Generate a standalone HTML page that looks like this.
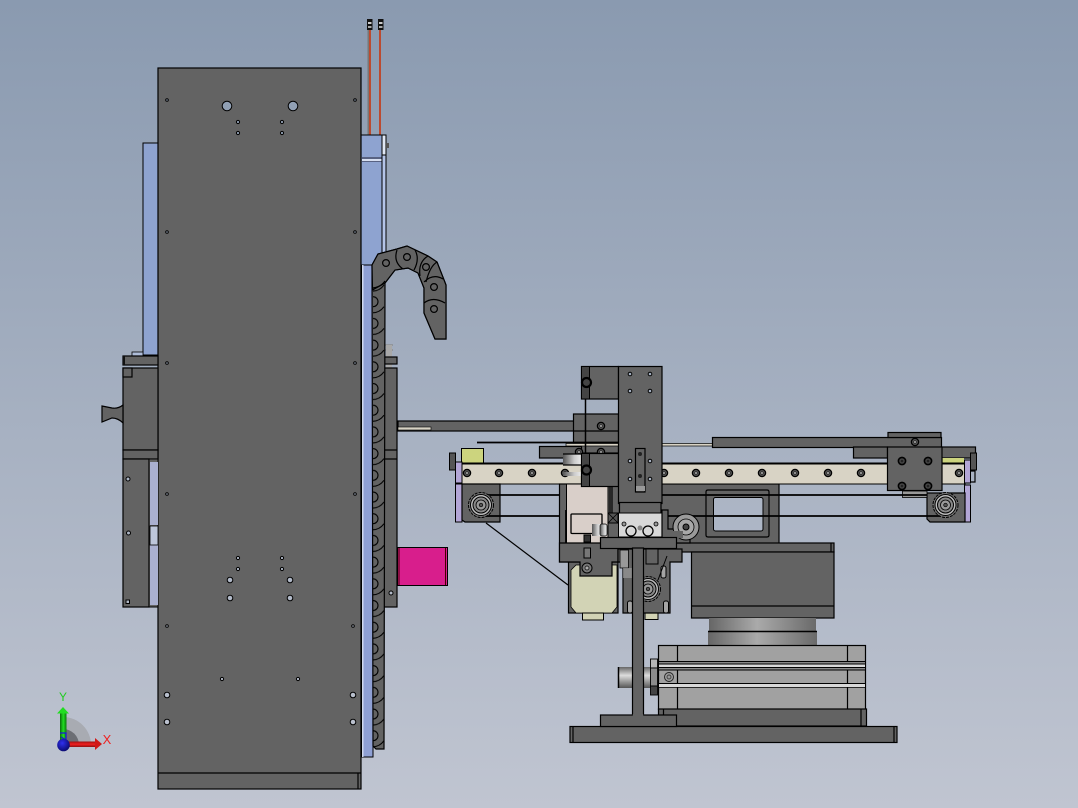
<!DOCTYPE html>
<html><head><meta charset="utf-8"><title>CAD assembly</title>
<style>
html,body{margin:0;padding:0;width:1078px;height:808px;overflow:hidden;background:#a5afc0}
svg{display:block}
text{font-family:"Liberation Sans",sans-serif}
.d{fill:#636363;stroke:#000;stroke-width:1.2}
.k{fill:none;stroke:#000;stroke-width:1.2}
.h{fill:url(#bg);stroke:#000;stroke-width:1}
</style></head><body>
<svg width="1078" height="808" viewBox="0 0 1078 808" xmlns="http://www.w3.org/2000/svg">
<defs>
<linearGradient id="bg" gradientUnits="userSpaceOnUse" x1="0" y1="0" x2="0" y2="808"><stop offset="0" stop-color="#8a9ab0"/><stop offset="1" stop-color="#c0c5d1"/></linearGradient>
<linearGradient id="cyl" x1="0" y1="0" x2="1" y2="0"><stop offset="0" stop-color="#666"/><stop offset=".45" stop-color="#aaa"/><stop offset="1" stop-color="#6a6a6a"/></linearGradient>
<linearGradient id="rod" x1="0" y1="0" x2="0" y2="1"><stop offset="0" stop-color="#666"/><stop offset=".4" stop-color="#ddd"/><stop offset="1" stop-color="#555"/></linearGradient>
<linearGradient id="roll" x1="0" y1="0" x2="1" y2="0"><stop offset="0" stop-color="#555"/><stop offset=".6" stop-color="#ccc"/><stop offset="1" stop-color="#eee"/></linearGradient>
<linearGradient id="gy" x1="0" y1="0" x2="1" y2="0"><stop offset="0" stop-color="#0a6a0a"/><stop offset=".5" stop-color="#22dd22"/><stop offset="1" stop-color="#0a7a0a"/></linearGradient>
<linearGradient id="rd" x1="0" y1="0" x2="0" y2="1"><stop offset="0" stop-color="#a01010"/><stop offset=".5" stop-color="#f02020"/><stop offset="1" stop-color="#901010"/></linearGradient>
<radialGradient id="bl" cx=".4" cy=".35" r=".7"><stop offset="0" stop-color="#3030ee"/><stop offset="1" stop-color="#08086a"/></radialGradient>
<pattern id="chain" x="373" y="272" width="12" height="21.7" patternUnits="userSpaceOnUse">
<rect width="12" height="21.7" fill="#636363"/>
<path d="M0 3A5 5 0 0 1 0 13M0 19C4 19 8 17 11 13" fill="none" stroke="#000" stroke-width="1.1"/>
</pattern>
<g id="s"><circle r="3.6" fill="#555" stroke="#000" stroke-width="1.3"/><circle r="1.4" fill="#999" stroke="#222" stroke-width=".6"/></g>
<g id="sb"><circle r="3.6" fill="#444" stroke="#000" stroke-width="1.6"/><circle r="1.3" fill="#222"/></g>
<g id="p"><circle r="12.5" fill="#777" stroke="#000" stroke-width="1" stroke-dasharray="3 1"/><circle r="10.5" fill="#bbb" stroke="#000" stroke-width="1"/><circle r="8" fill="#888" stroke="#000" stroke-width="1"/><circle r="5" fill="#999" stroke="#000" stroke-width=".8"/><circle r="1.8" fill="#555" stroke="#000" stroke-width=".7"/></g>
</defs>
<rect width="1078" height="808" fill="url(#bg)"/>

<!-- rods top -->
<rect x="367.500" y="30" width="1.500" height="105" fill="#777"/>
<rect x="369" y="30" width="2" height="105" fill="#bb4a30"/>
<rect x="379" y="30" width="2" height="105" fill="#bb4a30"/>
<rect x="367" y="19" width="5.500" height="11" fill="#111"/><rect x="368" y="22" width="3.500" height="2" fill="#ccc"/><rect x="368" y="26" width="3.500" height="2" fill="#aaa"/>
<rect x="378" y="19" width="5.500" height="11" fill="#111"/><rect x="379" y="22" width="3.500" height="2" fill="#ccc"/><rect x="379" y="26" width="3.500" height="2" fill="#aaa"/>

<!-- blue back parts -->
<rect x="143" y="143" width="15" height="212" fill="#8ea3d0" stroke="#000"/>
<rect x="361" y="135" width="21" height="130" fill="#8ea3d0" stroke="#000"/>
<path d="M362 158H382M362 161H382" stroke="#223" stroke-width="1"/><rect x="362" y="159" width="20" height="2" fill="#d6def0"/>
<rect x="382" y="135" width="4" height="130" fill="#b4c4e8" stroke="#000"/>
<rect x="382" y="135" width="4" height="20" fill="#dfe7f5" stroke="#000"/>
<rect x="386" y="143" width="3" height="5" fill="#555"/>
<rect x="362" y="265" width="11" height="492" fill="#8fa0d4" stroke="#000"/>
<rect x="362" y="265" width="1.500" height="492" fill="#d0d8ee"/>

<!-- main panel -->
<rect x="158" y="68" width="203" height="721" class="d"/>
<path d="M158 773H361" class="k"/><path d="M358 773V789" class="k"/>
<g class="h">
<circle cx="167" cy="100" r="1.300"/><circle cx="355" cy="100" r="1.300"/>
<circle cx="227" cy="106" r="4.800"/><circle cx="293" cy="106" r="4.800"/>
<circle cx="238" cy="122" r="1.600"/><circle cx="282" cy="122" r="1.600"/><circle cx="238" cy="133" r="1.600"/><circle cx="282" cy="133" r="1.600"/>
<circle cx="167" cy="232" r="1.300"/><circle cx="355" cy="232" r="1.300"/>
<circle cx="167" cy="363" r="1.300"/><circle cx="355" cy="363" r="1.300"/>
<circle cx="167" cy="494" r="1.300"/><circle cx="355" cy="494" r="1.300"/>
<circle cx="238" cy="558" r="1.600"/><circle cx="282" cy="558" r="1.600"/><circle cx="238" cy="569" r="1.600"/><circle cx="282" cy="569" r="1.600"/>
<circle cx="230" cy="580" r="2.800"/><circle cx="290" cy="580" r="2.800"/><circle cx="230" cy="598" r="2.800"/><circle cx="290" cy="598" r="2.800"/>
<circle cx="167" cy="626" r="1.300"/><circle cx="353" cy="626" r="1.300"/>
<circle cx="222" cy="679" r="1.600"/><circle cx="298" cy="679" r="1.600"/>
<circle cx="167" cy="695" r="2.800"/><circle cx="353" cy="695" r="2.800"/>
<circle cx="167" cy="722" r="2.800"/><circle cx="353" cy="722" r="2.800"/>
</g>

<!-- left block -->
<rect x="132" y="352" width="11" height="4" fill="#aebcd8" stroke="#000" stroke-width=".8"/>
<rect x="123" y="356" width="35" height="9" class="d"/><rect x="123" y="356" width="2" height="9" fill="#111"/>
<rect x="123" y="368" width="35" height="82" class="d"/><rect x="123" y="368" width="9" height="9" class="d"/>
<rect x="123" y="450" width="35" height="9" class="d"/>
<rect x="123" y="459" width="26" height="148" class="d"/>
<rect x="149" y="459" width="9" height="148" fill="#636363" stroke="#000"/>
<rect x="150" y="462" width="8" height="63" fill="#aab0d0"/><rect x="150" y="545" width="8" height="60" fill="#aab0d0"/>
<rect x="150" y="526" width="8" height="19" fill="#bdc6da" stroke="#000" stroke-width=".8"/>
<circle cx="128" cy="479" r="2" class="h"/><circle cx="128.500" cy="533" r="2" class="h"/><rect x="126" y="600" width="3.500" height="3.500" class="h"/>
<path d="M102 406L112 408Q118 409 123 405V423Q118 418 112 418L102 422Z" class="d" stroke-width="1.600"/>

<!-- side plate + magenta -->
<path d="M385 345H393M385 350H393" stroke="#888" stroke-width="1.200"/>
<rect x="386" y="345" width="6" height="12" fill="#a8a8a8"/>
<rect x="386" y="364" width="6" height="4" fill="#a8a8a8"/>
<rect x="384" y="357" width="13" height="7" class="d"/>
<rect x="384" y="368" width="13" height="239" class="d"/>
<path d="M384 450H397M384 459H397" class="k"/>
<circle cx="391" cy="593" r="2" class="h"/>
<rect x="397.500" y="547.500" width="50" height="38" fill="#d81e8c" stroke="#000"/>
<path d="M399 548V585M445.500 548V585" stroke="#400" stroke-width="1"/>

<!-- chain -->
<path d="M372 265L378 254 397 249 407 246 428 256 437 262 446 285 446 339 435 339 424 313 424 288 418 273 408 268 395 270 385 283 384 749 376 749 373 746Z" fill="url(#chain)" stroke="#000" stroke-width="1.200"/>
<path d="M372 265L378 254 397 249 407 246 428 256 437 262 446 285 446 339 435 339 424 313 424 288 418 273 408 268 395 270 385 283 372.500 290Z" class="d"/>
<g class="k">
<circle cx="386" cy="263" r="3.400"/><circle cx="407" cy="257" r="3.400"/><circle cx="426" cy="267" r="3.400"/><circle cx="434" cy="287" r="3.400"/><circle cx="434" cy="309" r="3.400"/>
<path d="M397 250Q393 262 403 269M415 250Q420 259 414 270M428 256Q418 262 420 276M437 262Q430 266 426 282M424 282Q433 273 443 279M424 303Q433 296 445 303M373 288Q381 287 385 281"/>
</g>

<!-- back plate w/ window -->
<rect x="660" y="484" width="119" height="60" class="d"/>
<path d="M708 490H767Q769 490 769 492V535Q769 537 767 537H708Q706 537 706 535V492Q706 490 708 490Z" class="k"/>
<rect x="713.500" y="497.500" width="49.500" height="33.500" rx="2" class="h" stroke-width="1.200"/>

<!-- motor & stack -->
<rect x="663" y="543" width="171" height="9" class="d"/><path d="M831 543V552" class="k"/>
<rect x="691.500" y="552" width="142.500" height="66" class="d"/><path d="M692 606H834" class="k"/>
<rect x="709" y="618" width="107" height="14" fill="url(#cyl)"/>
<rect x="708" y="632" width="109" height="13.500" fill="url(#cyl)"/><path d="M708 631.500H817" stroke="#000" stroke-width="1.500"/>

<!-- cylinder -->
<rect x="618" y="667" width="34" height="21" fill="url(#rod)"/><path d="M618.500 667V688" stroke="#000" stroke-width="1.500"/>
<rect x="650.500" y="659" width="7" height="9" fill="#b5b5b5" stroke="#000" stroke-width=".9"/>
<rect x="650.500" y="668" width="7" height="18" fill="#8c8c8c" stroke="#000" stroke-width=".9"/>
<rect x="650.500" y="686" width="7" height="9" fill="#444" stroke="#000" stroke-width=".9"/>
<rect x="658.500" y="645.500" width="207" height="64" fill="#a1a1a1" stroke="#000" stroke-width="1.200"/>
<path d="M677.500 645V709M847.500 645V709" class="k"/>
<rect x="659" y="662" width="206" height="8" fill="#888"/><rect x="659" y="664.500" width="206" height="2.500" fill="#d8d8d8"/>
<path d="M659 661.500H865M659 664H865M659 667.500H865M659 670H865M659 683.500H865" stroke="#000" stroke-width="1"/>
<rect x="659" y="684" width="206" height="3" fill="#d8d8d8"/><path d="M659 687.500H865" stroke="#000" stroke-width=".8"/>
<circle cx="669" cy="677" r="4.500" fill="#999" stroke="#222" stroke-width=".9"/><circle cx="669" cy="677" r="2" fill="none" stroke="#222" stroke-width=".7"/>
<rect x="658.500" y="709" width="208" height="17" class="d"/><path d="M663.500 709V726M861 709V726" class="k"/>
<rect x="570" y="726.500" width="327" height="16" class="d"/><path d="M573 726V742M894 726V742" class="k"/>

<!-- arm behind -->
<rect x="398" y="421" width="220" height="10" class="d"/>
<rect x="398" y="427" width="33" height="3" fill="#d8d3c5" stroke="#000" stroke-width=".6"/>
<rect x="573.500" y="414" width="45" height="39" class="d"/>
<path d="M573 431H618" class="k"/>
<use href="#s" x="601" y="426"/>
<rect x="566" y="443.500" width="180" height="2.500" fill="#d8d3c5" stroke="#000" stroke-width=".7"/>
<path d="M477 442.500H618" stroke="#000" stroke-width="1.800"/>
<rect x="539.500" y="446.500" width="42" height="11.500" class="d"/>
<use href="#s" x="579" y="452"/><use href="#s" x="601" y="452"/>

<!-- right top bar -->
<rect x="712.500" y="437.500" width="229" height="10" class="d"/>
<rect x="888" y="432.500" width="53" height="5" class="d"/>
<rect x="853.500" y="447" width="34" height="11" class="d"/>
<rect x="941" y="447" width="34.500" height="11" class="d"/>
<use href="#s" x="915" y="442"/>

<!-- rail + blocks -->
<rect x="461.500" y="448.500" width="22" height="15" fill="#ccd47e" stroke="#000"/>
<rect x="942" y="458" width="22" height="5" fill="#ccd47e"/>
<rect x="461" y="463" width="504" height="21" fill="#d8d3c5" stroke="#000"/>
<path d="M461 463.500H965" stroke="#000" stroke-width="2"/>
<g>
<use href="#s" x="467" y="473"/><use href="#s" x="499" y="473"/><use href="#s" x="532" y="473"/><use href="#s" x="565" y="473"/><use href="#s" x="664" y="473"/><use href="#s" x="696" y="473"/><use href="#s" x="729" y="473"/><use href="#s" x="762" y="473"/><use href="#s" x="795" y="473"/><use href="#s" x="828" y="473"/><use href="#s" x="861" y="473"/><use href="#s" x="959" y="473"/>
</g>
<rect x="449.500" y="453" width="6" height="17" fill="#555" stroke="#000"/>
<rect x="455.500" y="462" width="6.500" height="21" fill="#b3a6d6" stroke="#000"/>
<rect x="455.500" y="484" width="6.500" height="38" fill="#b3a6d6" stroke="#000"/>
<rect x="964.500" y="460" width="6" height="23" fill="#b3a6d6" stroke="#000"/>
<rect x="964.500" y="485" width="6" height="37" fill="#b3a6d6" stroke="#000"/>
<rect x="970.500" y="453" width="6" height="17" fill="#555" stroke="#000"/>
<path d="M971 471H975V482H971" class="k"/>
<path d="M462 484H500V522H465L462 520Z" class="d"/>
<path d="M927 493H965V522H930L927 519Z" class="d"/>
<rect x="902.500" y="491" width="24.500" height="6.500" fill="#999" stroke="#000" stroke-width=".8"/>
<rect x="887.500" y="447" width="54.500" height="43.500" class="d"/>
<use href="#sb" x="902" y="461"/><use href="#sb" x="928" y="461"/><use href="#sb" x="902" y="486"/><use href="#sb" x="928" y="486"/>
<path d="M482 495H927M482 516H940" stroke="#000" stroke-width="1.800"/>
<use href="#p" x="481" y="505"/><use href="#p" x="945.500" y="505"/>
<path d="M486 523L568 585" stroke="#000" stroke-width="1.200"/>

<!-- center housing -->
<rect x="559.500" y="484" width="60" height="78" class="d"/>
<rect x="566.500" y="484" width="41.500" height="63" fill="#d9cfc9" stroke="#000"/>
<path d="M610 484V513M612 484V513" class="k"/>
<rect x="571" y="514" width="31" height="19.500" rx="1" fill="#d9cfc9" stroke="#000" stroke-width="1.300"/>
<rect x="592" y="524" width="9" height="12" fill="url(#roll)"/><rect x="600" y="524" width="7" height="12" rx="2" fill="url(#roll)" stroke="#000" stroke-width=".7"/>
<rect x="584" y="535" width="6.500" height="7" fill="#333" stroke="#000"/>
<rect x="608" y="513" width="10" height="10" fill="#555" stroke="#000"/>
<path d="M608 513L618 523M618 513L608 523" stroke="#000" stroke-width=".8"/>
<path d="M566 510V545" stroke="#000" stroke-width="1.800"/>
<rect x="563" y="454" width="19" height="11" fill="url(#roll)"/><rect x="563" y="472" width="19" height="4" fill="url(#roll)"/>
<path d="M563 454H582M563 465H582" class="k"/>

<!-- sliders/blocks at column -->
<rect x="581.500" y="366.500" width="37" height="32.500" class="d"/>
<rect x="581.500" y="366.500" width="8" height="32.500" fill="#444" stroke="#000"/>
<rect x="581.500" y="453.500" width="37" height="33" class="d"/>
<rect x="581.500" y="453.500" width="8" height="33" fill="#444" stroke="#000"/>
<path d="M585.500 399V453" stroke="#000" stroke-width="1.500"/>
<circle cx="586.500" cy="382.500" r="4.500" fill="#444" stroke="#000" stroke-width="2.200"/>
<circle cx="586.500" cy="470" r="4.500" fill="#444" stroke="#000" stroke-width="2.200"/>

<rect x="618.500" y="366.500" width="43.500" height="137" class="d"/>
<g class="h"><circle cx="630" cy="374" r="1.800"/><circle cx="650" cy="374" r="1.800"/><circle cx="630" cy="391" r="1.800"/><circle cx="650" cy="391" r="1.800"/><circle cx="630" cy="461" r="1.800"/><circle cx="650" cy="461" r="1.800"/><circle cx="630" cy="479" r="1.800"/><circle cx="650" cy="479" r="1.800"/></g>
<rect x="635.500" y="448.500" width="9.500" height="43.500" class="d"/>
<circle cx="640" cy="454" r="2" fill="#222"/><circle cx="640" cy="476" r="2" fill="#222"/>
<rect x="636" y="486" width="9" height="5" fill="#999"/>
<rect x="619.500" y="502.500" width="41.500" height="11" class="d"/>

<!-- white clamp -->
<rect x="618.500" y="513" width="43.500" height="24" fill="#d8d8d8" stroke="#000"/>
<g fill="#d8d8d8" stroke="#000" stroke-width="1.300"><circle cx="631" cy="531" r="5"/><circle cx="648" cy="531" r="5"/></g>
<circle cx="624" cy="524" r="2" fill="#999" stroke="#000" stroke-width=".8"/><circle cx="656" cy="524" r="2" fill="#999" stroke="#000" stroke-width=".8"/>
<circle cx="640" cy="528" r="2.500" fill="#888"/>
<path d="M662 510H668V529H690V543H662Z" class="d"/>
<circle cx="686" cy="527" r="13" fill="#9a9a9a" stroke="#000" stroke-width="1"/><circle cx="686" cy="527" r="8" fill="#a8a8a8" stroke="#000" stroke-width=".8"/><circle cx="686" cy="527" r="3" fill="#444" stroke="#000"/>
<rect x="672" y="531" width="11" height="7" fill="#636363"/>

<!-- lower housing -->
<rect x="568.500" y="562" width="49.500" height="51" class="d"/>
<path d="M571 570L576 565H617V607L612 613H576L571 607Z" fill="#d2d3b5" stroke="#000" stroke-width=".8"/>
<rect x="582.500" y="613" width="21" height="7" fill="#d2d3b5" stroke="#000"/>
<path d="M559.500 543H618V562H612V576H580V562H559.500Z" class="d"/>
<rect x="584" y="548" width="6.500" height="10" fill="#777" stroke="#000"/>
<circle cx="587" cy="568" r="5" fill="#777" stroke="#000"/><circle cx="587" cy="568" r="2" fill="#aaa" stroke="#000" stroke-width=".7"/>
<rect x="645" y="613" width="13" height="6.500" fill="#d2d3b5" stroke="#000"/>
<path d="M623 562V613H670V562H682V549H618V562Z" class="d"/>
<rect x="620" y="550" width="8.500" height="18" fill="#999" stroke="#000" stroke-width=".8"/>
<rect x="623" y="568" width="9" height="10" fill="#9a9a9a" opacity=".7"/>
<rect x="646" y="549" width="12" height="15" fill="#636363" stroke="#000"/>
<rect x="627.500" y="601" width="5" height="12" rx="2" fill="#a5a5a5" stroke="#000"/><rect x="663.500" y="601" width="5" height="12" rx="2" fill="#a5a5a5" stroke="#000"/>
<rect x="661" y="566" width="5" height="12" rx="2" fill="#a5a5a5" stroke="#000"/>
<path d="M667 556L658 580" stroke="#000" stroke-width="1"/>
<use href="#p" x="648" y="589"/>

<!-- post -->
<rect x="600.500" y="537.500" width="76" height="11" class="d"/>
<rect x="632.500" y="548" width="11" height="167" class="d"/>
<rect x="600.500" y="715" width="76" height="11.500" class="d"/>
<rect x="632.800" y="714" width="10.400" height="3" fill="#636363"/>

<!-- triad -->
<path d="M63 745V717A28 28 0 0 1 91 745Z" fill="#a8abb2"/>
<path d="M63 745V729A16 16 0 0 1 79 745Z" fill="#6c6e74"/>
<rect x="60" y="712" width="6.500" height="30" fill="url(#gy)"/>
<path d="M57 713.500L63 707 69 713.500Z" fill="#22dd22"/>
<rect x="66" y="741.500" width="30" height="5.500" fill="url(#rd)"/>
<path d="M95 738L102 744 95 750Z" fill="#d01818"/>
<path d="M60 733H66V740L61 737" fill="none" stroke="#1818d8" stroke-width="1.200"/>
<circle cx="63.500" cy="745" r="6.300" fill="url(#bl)"/>
<text x="63" y="701" font-size="12" fill="#22cc22" text-anchor="middle">Y</text>
<text x="107" y="744" font-size="13" fill="#ee2222" text-anchor="middle">X</text>
</svg>
</body></html>
